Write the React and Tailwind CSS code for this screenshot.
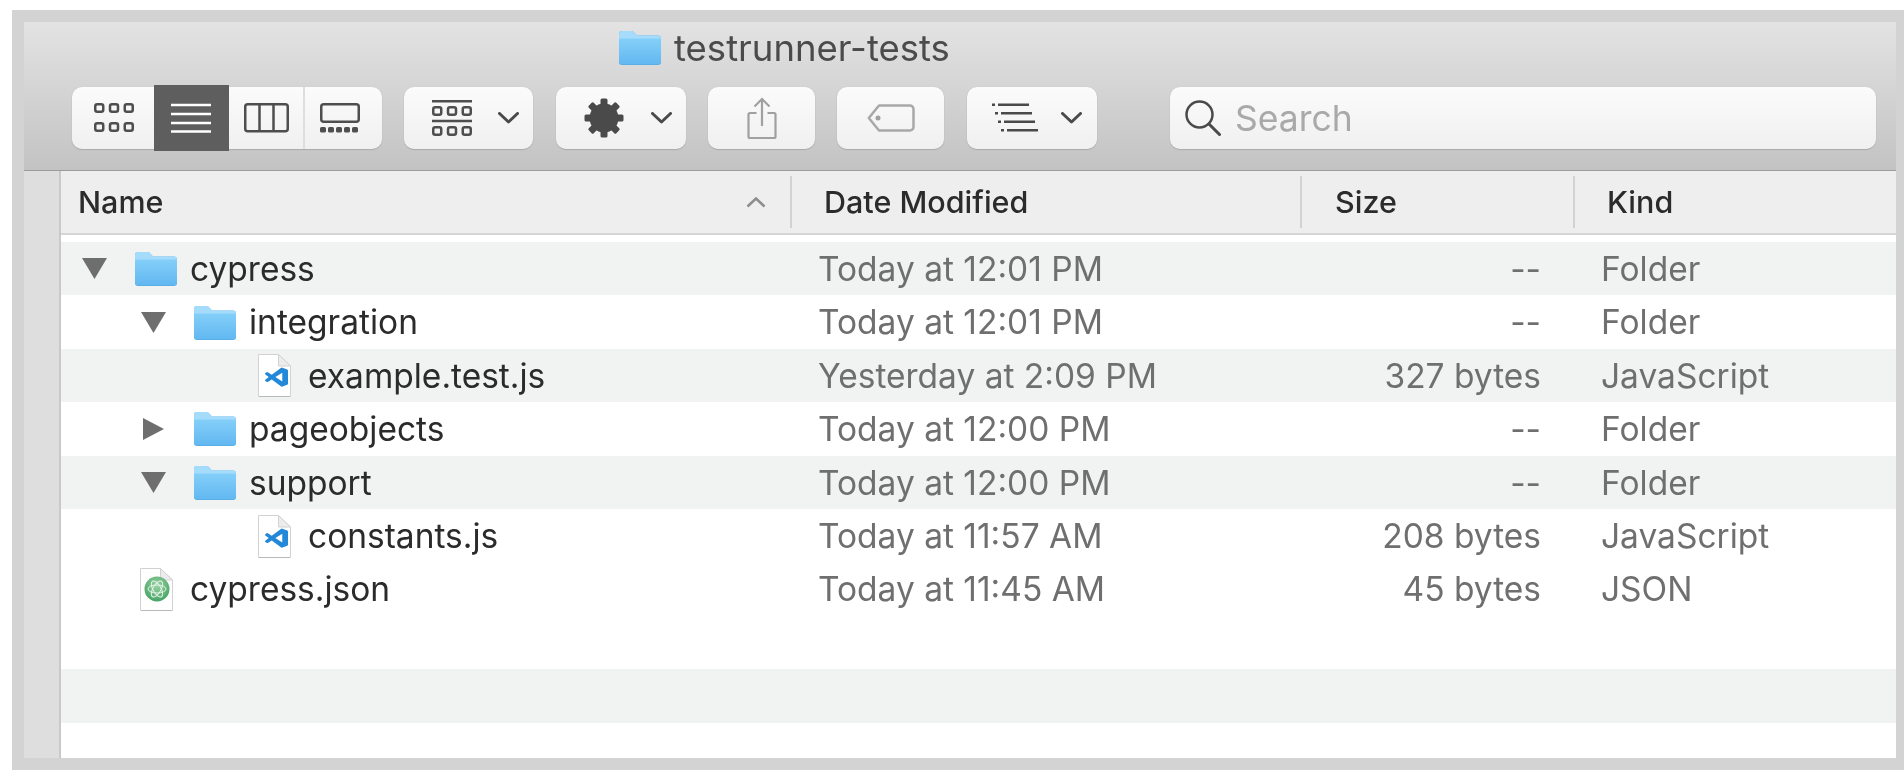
import { Fragment } from 'react';

const rows = [
  { name: 'cypress', depth: 0, icon: 'folder', open: true, date: 'Today at 12:01 PM', size: '--', kind: 'Folder', tint: true },
  { name: 'integration', depth: 1, icon: 'folder', open: true, date: 'Today at 12:01 PM', size: '--', kind: 'Folder' },
  { name: 'example.test.js', depth: 2, icon: 'code', date: 'Yesterday at 2:09 PM', size: '327 bytes', kind: 'JavaScript', tint: true },
  { name: 'pageobjects', depth: 1, icon: 'folder', open: false, date: 'Today at 12:00 PM', size: '--', kind: 'Folder' },
  { name: 'support', depth: 1, icon: 'folder', open: true, date: 'Today at 12:00 PM', size: '--', kind: 'Folder', tint: true },
  { name: 'constants.js', depth: 2, icon: 'code', date: 'Today at 11:57 AM', size: '208 bytes', kind: 'JavaScript' },
  { name: 'cypress.json', depth: 0, icon: 'atom', date: 'Today at 11:45 AM', size: '45 bytes', kind: 'JSON' },
];

const indent = ['pl-[21px]', 'pl-[80px]', 'pl-[139px]'];

const Chevron = ({ className = '' }) => (
  <svg width="21" height="12" viewBox="0 0 21 12" className={className}>
    <path d="M1.5 1.5 10.5 10 19.5 1.5" fill="none" stroke="#4a4a4a" strokeWidth="3" strokeLinecap="round" strokeLinejoin="round" />
  </svg>
);

const Grid = ({ x = 0, y = 0 }) => (
  <g transform={`translate(${x} ${y})`} fill="none" stroke="#4e4e4e" strokeWidth="2.5">
    <rect x="1.25" y="1.25" width="8" height="7.5" rx="2" />
    <rect x="16" y="1.25" width="8" height="7.5" rx="2" />
    <rect x="30.75" y="1.25" width="8" height="7.5" rx="2" />
  </g>
);

const IconGrid = () => (
  <svg width="40" height="30" viewBox="0 0 40 30">
    <Grid />
    <Grid y="19" />
  </svg>
);

const IconList = () => (
  <svg width="40" height="30" viewBox="0 0 40 30">
    <path d="M0 2h40M0 11h40M0 20h40M0 28.500h40" stroke="#fff" strokeWidth="2.5" />
  </svg>
);

const IconColumns = () => (
  <svg width="45" height="30" viewBox="0 0 45 30">
    <rect x="1.25" y="1.25" width="42.5" height="27" rx="2.500" fill="none" stroke="#4e4e4e" strokeWidth="2.500" />
    <path d="M15.500 1v28M29.500 1v28" stroke="#4e4e4e" strokeWidth="2.500" />
  </svg>
);

const IconGallery = () => (
  <svg width="40" height="30" viewBox="0 0 40 30">
    <rect x="1.25" y="1.25" width="37.500" height="17.500" rx="2.500" fill="none" stroke="#4e4e4e" strokeWidth="2.500" />
    {[0, 8, 16, 24, 32].map((x) => (
      <rect key={x} x={x} y="24" width="6" height="5.500" rx="1.500" fill="#4e4e4e" />
    ))}
  </svg>
);

const IconGroup = () => (
  <svg width="40" height="37" viewBox="0 0 40 37">
    <path d="M0 1.250h40M0 21h40" stroke="#4e4e4e" strokeWidth="2.500" />
    <Grid y="6" />
    <Grid y="26" />
  </svg>
);

const IconGear = () => (
  <svg width="40" height="40" viewBox="0 0 40 40">
    {[0, 45, 90, 135].map((a) => (
      <rect key={a} x="16.500" y="0.500" width="7" height="39" rx="1.500" fill="#4a4a4a" transform={`rotate(${a} 20 20)`} />
    ))}
    <circle cx="20" cy="20" r="10" fill="none" stroke="#4a4a4a" strokeWidth="9" />
  </svg>
);

const IconShare = () => (
  <svg width="30" height="43" viewBox="0 0 30 43" fill="none" stroke="#a0a0a0" strokeWidth="2.200">
    <path d="M9.500 16H3a1.500 1.500 0 0 0-1.500 1.500v22A1.500 1.500 0 0 0 3 41h24a1.500 1.500 0 0 0 1.500-1.500v-22A1.500 1.500 0 0 0 27 16h-6.500" />
    <path d="M15 29V2M7.500 9.500 15 2l7.500 7.500" />
  </svg>
);

const IconTag = () => (
  <svg width="48" height="28" viewBox="0 0 48 28">
    <path d="M12 1.500h31a3.500 3.500 0 0 1 3.500 3.500v18a3.500 3.500 0 0 1-3.500 3.500H12L1.800 14Z" fill="none" stroke="#a8a8a8" strokeWidth="2.500" strokeLinejoin="round" />
    <circle cx="11" cy="14" r="2.500" fill="#a0a0a0" />
  </svg>
);

const IconSort = () => (
  <svg width="46" height="30" viewBox="0 0 46 30" fill="#4a4a4a">
    <rect x="0" y="0.500" width="3" height="2.500" />
    <rect x="6" y="0.500" width="31" height="2.500" />
    <rect x="3" y="9" width="3" height="2.500" />
    <rect x="9" y="9" width="31" height="2.500" />
    <rect x="6" y="17.500" width="3" height="2.500" />
    <rect x="12" y="17.500" width="31" height="2.500" />
    <rect x="9" y="26" width="3" height="2.500" />
    <rect x="15" y="26" width="31" height="2.500" />
  </svg>
);

const IconSearch = () => (
  <svg width="36" height="36" viewBox="0 0 36 36" fill="none" stroke="#4a4a4a">
    <circle cx="14.500" cy="14.500" r="13" strokeWidth="2.500" />
    <path d="m24 24 10.500 10.500" strokeWidth="3" strokeLinecap="round" />
  </svg>
);

const Folder = () => (
  <svg width="42" height="34" viewBox="0 0 42 34">
    <defs>
      <linearGradient id="folderBody" x1="0" y1="0" x2="0" y2="1">
        <stop offset="0" stopColor="#84cff9" />
        <stop offset="1" stopColor="#62b8f1" />
      </linearGradient>
    </defs>
    <path d="M0 3a3 3 0 0 1 3-3h9.500a3 3 0 0 1 2 .8L18 4.500h21a3 3 0 0 1 3 3V31a3 3 0 0 1-3 3H3a3 3 0 0 1-3-3Z" fill="#5aaee6" />
    <path d="M0 3a3 3 0 0 1 3-3h9.500a3 3 0 0 1 2 .8L18 4.500h21a3 3 0 0 1 3 3v1H0Z" fill="#a5dcfb" />
    <path d="M0 7.500h42V31a2 2 0 0 1-2 2H2a2 2 0 0 1-2-2Z" fill="url(#folderBody)" />
  </svg>
);

const Page = ({ children }) => (
  <svg width="33" height="43" viewBox="0 0 33 43">
    <path d="M.5.500h20L32.500 12v30.500H.5Z" fill="#fff" stroke="#d2d2d2" />
    <path d="M20.500.500V12h12Z" fill="#ececec" stroke="#d2d2d2" strokeLinejoin="round" />
    <path d="M1 42h31v1H1Z" fill="#b9b9b9" />
    {children}
  </svg>
);

// VS Code mark, squashed a little like the blown-up reference
const CodeFile = () => (
  <Page>
    <g transform="translate(7 13.500) scale(.96 .8)">
      <path
        d="M23.150 2.587 18.210.21a1.494 1.494 0 0 0-1.705.29l-9.460 8.630-4.120-3.128a.999.999 0 0 0-1.276.057L.327 7.261A1 1 0 0 0 .326 8.740L3.899 12 .326 15.260a1 1 0 0 0 .001 1.479L1.650 17.940a.999.999 0 0 0 1.276.057l4.120-3.128 9.460 8.630a1.492 1.492 0 0 0 1.704.29l4.942-2.377A1.500 1.500 0 0 0 24 20.060V3.939a1.500 1.500 0 0 0-.85-1.352zm-5.146 14.861L10.826 12l7.178-5.448v10.896z"
        fill="#2488d8"
      />
    </g>
  </Page>
);

const AtomFile = () => (
  <Page>
    <defs>
      <radialGradient id="atomBall" cx="0.5" cy="0.35" r="0.7">
        <stop offset="0" stopColor="#9ad3a4" />
        <stop offset="1" stopColor="#3f9f60" />
      </radialGradient>
    </defs>
    <circle cx="17" cy="21" r="12.500" fill="url(#atomBall)" />
    <g fill="none" stroke="#e4f3e6" strokeWidth="1">
      <ellipse cx="17" cy="21" rx="9" ry="4" />
      <ellipse cx="17" cy="21" rx="9" ry="4" transform="rotate(60 17 21)" />
      <ellipse cx="17" cy="21" rx="9" ry="4" transform="rotate(120 17 21)" />
    </g>
  </Page>
);

const Disclosure = ({ open }) => (
  <svg width="25" height="22" viewBox="0 0 25 22">
    {open ? <path d="M0 0h25L12.500 21Z" fill="#6e6e6e" /> : <path d="M2 0 23 11 2 22Z" fill="#6e6e6e" />}
  </svg>
);

const ToolButton = ({ className = '', children }) => (
  <div className={`flex h-[62px] items-center rounded-[10px] bg-gradient-to-b from-[#fbfbfb] to-[#f0f0f0] shadow-[0_1px_1px_#a9a9a9,0_0_1px_#b5b5b5] ${className}`}>
    {children}
  </div>
);

const Toolbar = () => (
  <div className="h-[149px] shrink-0 border-b border-[#9c9c9c] bg-gradient-to-b from-[#e3e3e3] to-[#c3c3c3]">
    <div className="flex h-[65px] items-center pb-[13px] pl-[595px]">
      <Folder />
      <span className="ml-[13px] text-[36.500px] text-[#4b4b4b]">testrunner-tests</span>
    </div>
    <div className="flex items-center pl-[48px] pr-[20px]">
      <ToolButton className="w-[310px]">
        <div className="flex h-full w-[82px] items-center justify-center pl-[2px]"><IconGrid /></div>
        <div className="-my-[2px] flex h-[66px] w-[75px] items-center justify-center bg-[#5e5e5e] pr-[2px]"><IconList /></div>
        <div className="flex h-full w-[76px] items-center justify-center border-r-2 border-[#dedede]"><IconColumns /></div>
        <div className="flex h-full flex-1 items-center justify-center pr-[8px]"><IconGallery /></div>
      </ToolButton>
      <ToolButton className="ml-[22px] w-[129px] pl-[28px]">
        <IconGroup />
        <Chevron className="ml-[26px]" />
      </ToolButton>
      <ToolButton className="ml-[23px] w-[130px] pl-[28px]">
        <IconGear />
        <Chevron className="ml-[27px]" />
      </ToolButton>
      <ToolButton className="ml-[22px] w-[107px] justify-center">
        <IconShare />
      </ToolButton>
      <ToolButton className="ml-[22px] w-[107px] justify-center">
        <IconTag />
      </ToolButton>
      <ToolButton className="ml-[23px] w-[130px] pl-[25px]">
        <IconSort />
        <Chevron className="ml-[23px]" />
      </ToolButton>
      <ToolButton className="ml-[73px] flex-1 pl-[15px]">
        <IconSearch />
        <span className="ml-[14px] pt-[2px] text-[35.500px] text-[#a9a9a9]">Search</span>
      </ToolButton>
    </div>
  </div>
);

const Header = () => (
  <div className="flex h-[64px] shrink-0 border-b-2 border-[#d6d6d6] bg-[#eeeeee] py-[5px] text-[30.500px] font-medium text-[#2b2b2b]">
    <div className="flex w-[731px] items-center justify-between border-r-2 border-[#d2d2d2] pl-[17px] pr-[24px]">
      <span>Name</span>
      <svg width="20" height="11" viewBox="0 0 20 11">
        <path d="M1.500 9.500 10 1.500l8.500 8" fill="none" stroke="#8d8d8d" strokeWidth="2.500" />
      </svg>
    </div>
    <div className="flex w-[510px] items-center border-r-2 border-[#d2d2d2] pl-[32px]">Date Modified</div>
    <div className="flex w-[273px] items-center border-r-2 border-[#d2d2d2] pl-[33px]">Size</div>
    <div className="flex flex-1 items-center pl-[32px]">Kind</div>
  </div>
);

const Row = ({ row }) => (
  <div className={`flex h-[53.4px] items-center pt-[1px] text-[33.500px] text-[#6f6f6f] ${row.tint ? 'bg-[#f1f3f2]' : ''}`}>
    <div className={`flex w-[757px] items-center text-[#2b2b2b] ${indent[row.depth]}`}>
      <div className="flex w-[53px] shrink-0 items-center">
        {row.icon === 'folder' && <Disclosure open={row.open} />}
      </div>
      <div className="flex w-[42px] shrink-0 justify-center">
        {row.icon === 'folder' && <Folder />}
        {row.icon === 'code' && <CodeFile />}
        {row.icon === 'atom' && <AtomFile />}
      </div>
      <span className="ml-[13px]">{row.name}</span>
    </div>
    <div className="w-[482px]">{row.date}</div>
    <div className="w-[241px] text-right">{row.size}</div>
    <div className="ml-[60px]">{row.kind}</div>
  </div>
);

const App = () => (
  <div className="h-[780px] w-[1904px] overflow-hidden bg-white pl-[12px] pt-[10px] font-['Inter',sans-serif] blur-[0.5px]">
    <div className="flex h-[760px] flex-col bg-[#d3d3d3] pb-[12px] pl-[12px] pr-[8px] pt-[12px]">
      <Toolbar />
      <div className="flex min-h-0 flex-1">
        <div className="w-[37px] shrink-0 border-r-2 border-[#c9c9c9] bg-[#dedede]" />
        <div className="flex min-w-0 flex-1 flex-col bg-white">
          <Header />
          <div className="pt-[7px]">
            {rows.map((row) => (
              <Fragment key={row.name}>
                <Row row={row} />
              </Fragment>
            ))}
            <div className="h-[53.4px]" />
            <div className="h-[53.4px] bg-[#f1f3f2]" />
          </div>
        </div>
      </div>
    </div>
  </div>
);

export default App;
